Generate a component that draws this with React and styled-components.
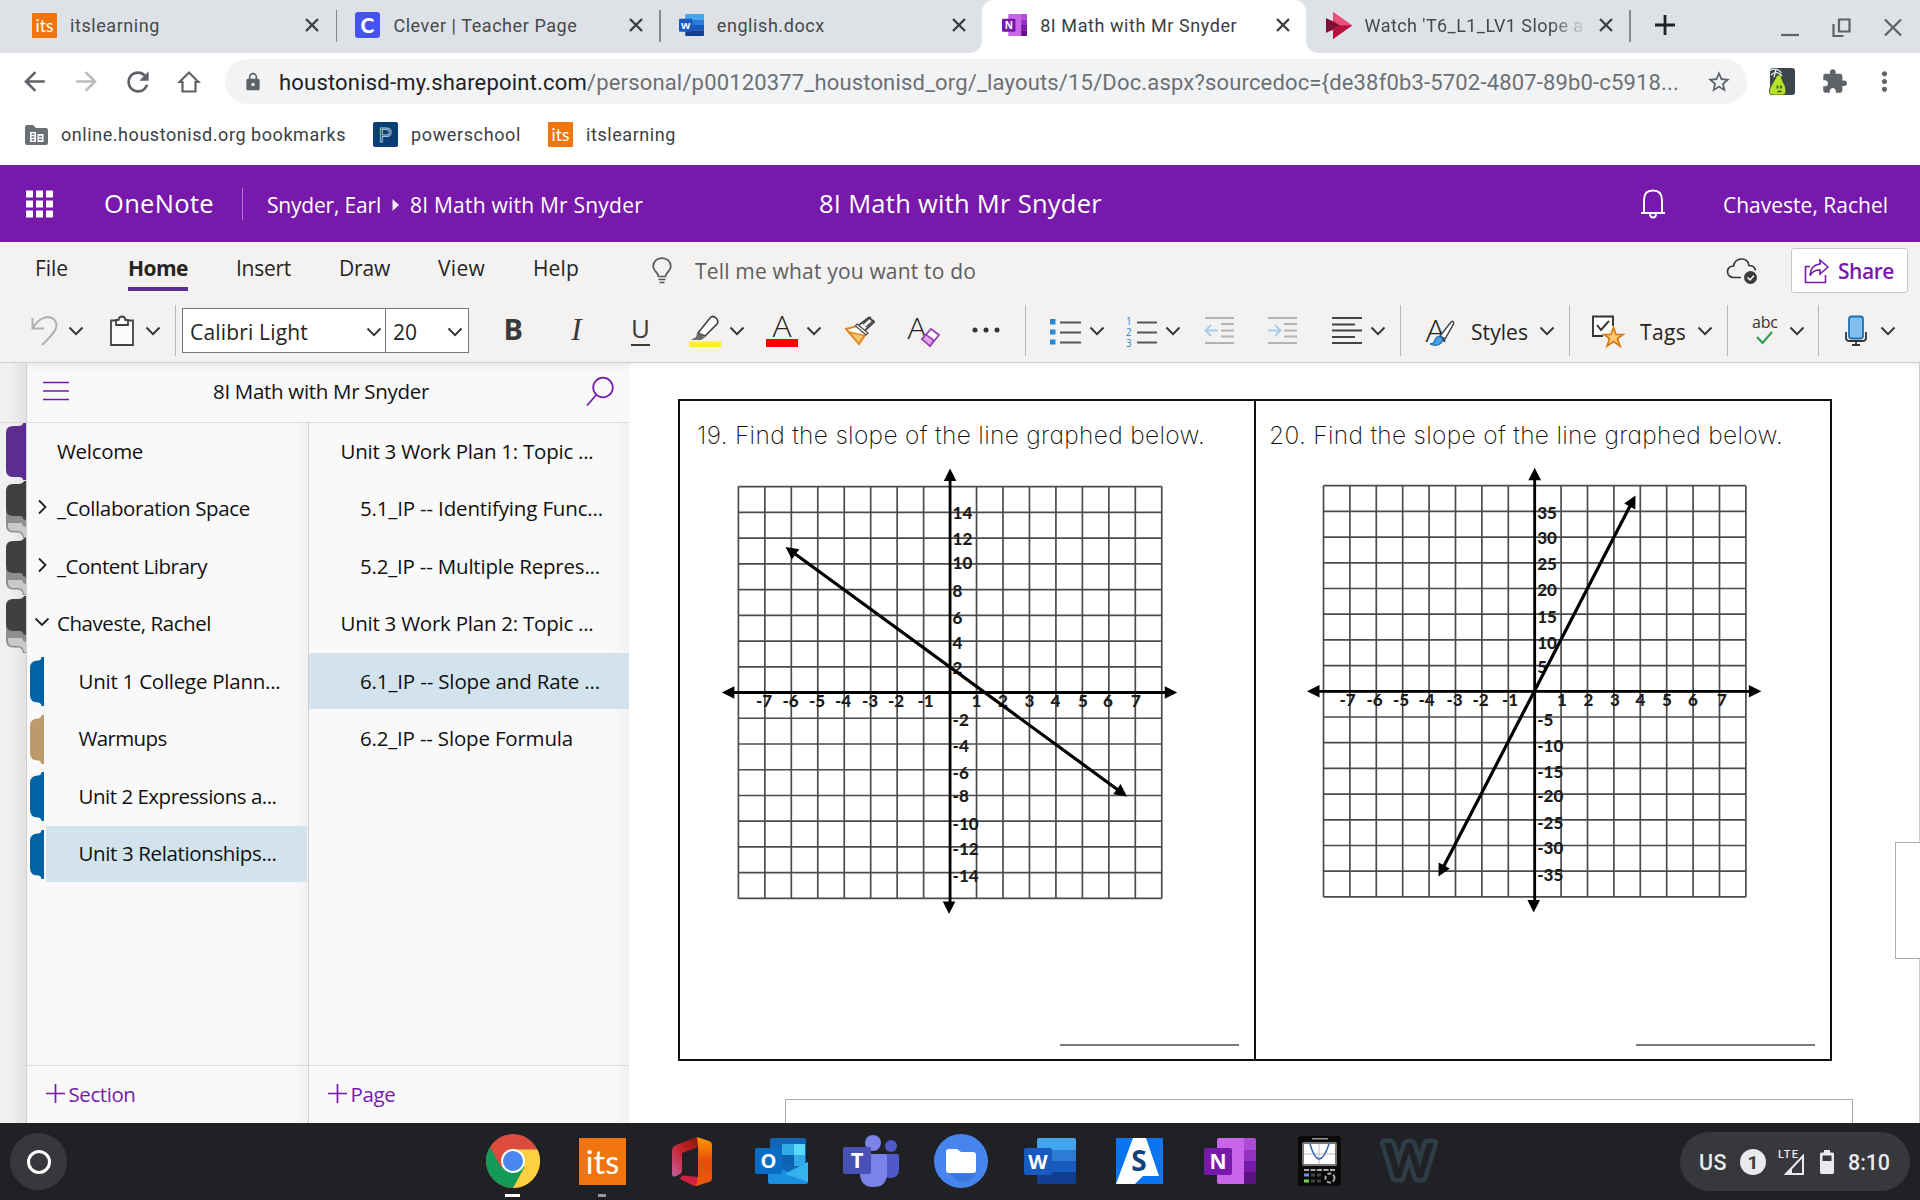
import React, { useLayoutEffect, useRef, useState } from 'react'
import styled, { createGlobalStyle } from 'styled-components';
import {
  MdArrowBack, MdArrowForward, MdRefresh, MdLock, MdStarBorder,
  MdExtension, MdMoreVert,
} from 'react-icons/md';

const UI = '"Open Sans", "Noto Sans", sans-serif';
const PURPLE = '#7719aa';


// spreads the letters so that a label takes the given width
const Fit = ({ w, children }) => {
  const ref = useRef(null);
  const [gap, setGap] = useState(0);

  useLayoutEffect(() => {
    const natural = ref.current.getBoundingClientRect().width;
    setGap((w - natural) / children.length);
  }, [])

  return <FitText ref={ref} style={{ letterSpacing: gap }}>{children}</FitText>
}

const Chev = ({ ml, color = '#333' }) => (
  <Icon $ml={ml} width="16" height="10" viewBox="0 0 16 10">
    <path d="M1.5 1.5L8 8.2L14.5 1.5" fill="none" stroke={color} strokeWidth="1.9" />
  </Icon>
)

const ItsLogo = ({ size, radius = 0 }) => (
  <Icon width={size} height={size} viewBox="0 0 26 26">
    <rect width="26" height="26" rx={radius} fill="#f0750f" />
    <text x="13" y="20" textAnchor="middle" fontFamily="Lato" fontSize="18" fill="#fff">its</text>
  </Icon>
)

const WordLogo = ({ w, h }) => (
  <Icon width={w} height={h} viewBox="0 0 52 46" preserveAspectRatio="none">
    <path d="M13 2a2 2 0 0 1 2-2h35a2 2 0 0 1 2 2v10H13z" fill="#41a5ee" />
    <path d="M13 12h39v11H13z" fill="#2b7cd3" />
    <path d="M13 23h39v11H13z" fill="#185abd" />
    <path d="M13 34h39v10a2 2 0 0 1-2 2H15a2 2 0 0 1-2-2z" fill="#103f91" />
    <rect y="10" width="28" height="27" rx="2" fill="#185abd" />
    <text x="14" y="30.5" textAnchor="middle" fontFamily="Open Sans" fontWeight="700" fontSize="20" fill="#fff">W</text>
  </Icon>
)

const NoteLogo = ({ w, h }) => (
  <Icon width={w} height={h} viewBox="0 0 52 46" preserveAspectRatio="none">
    <path d="M13 2a2 2 0 0 1 2-2h27v46H15a2 2 0 0 1-2-2z" fill="#ca64ea" />
    <path d="M40 0h10a2 2 0 0 1 2 2v10H40z" fill="#ae4bd5" />
    <path d="M40 12h12v11H40z" fill="#9332bf" />
    <path d="M40 23h12v11H40z" fill="#7719aa" />
    <path d="M40 34h12v10a2 2 0 0 1-2 2H40z" fill="#5b1382" />
    <rect y="10" width="28" height="27" rx="2" fill="#7719aa" />
    <text x="14" y="31" textAnchor="middle" fontFamily="Open Sans" fontWeight="700" fontSize="21" fill="#fff">N</text>
  </Icon>
)

const CleverLogo = () => (
  <Icon width="25" height="26" viewBox="0 0 25 26">
    <rect width="25" height="26" rx="3" fill="#4453f0" />
    <text x="12.5" y="20.5" textAnchor="middle" fontFamily="Lato" fontWeight="900" fontSize="21" fill="#fff">C</text>
  </Icon>
)

const StreamLogo = () => (
  <Icon width="26" height="27" viewBox="0 0 26 27">
    <path d="M7 0L26 13.5L7 27V18L0 20V7L7 9z" fill="#d9255b" />
    <path d="M7 0L26 13.5H14L7 8z" fill="#e8517f" />
    <path d="M0 6L14 13.5L0 21z" fill="#7d1037" />
    <path d="M7 27L26 13.5H14L7 17z" fill="#b5123f" />
  </Icon>
)


/* ---------- browser ---------- */

const tabs = [
  { icon: <ItsLogo size={25} radius={1} />, name: 'itslearning', w: 90 },
  { icon: <CleverLogo />, name: 'Clever | Teacher Page', w: 184 },
  { icon: <WordLogo w={25} h={22} />, name: 'english.docx', w: 108 },
  { icon: <NoteLogo w={25} h={22} />, name: '8I Math with Mr Snyder', w: 197, active: true },
  { icon: <StreamLogo />, name: "Watch 'T6_L1_LV1 Slope a", w: 219, fade: true },
]

const Browser = () => (
  <>
    <TabStrip>
      {tabs.map((t, i) => (
        <Tab key={t.name} $active={t.active} $line={i < 2 || i === 4}>
          {t.icon}
          <TabName $fade={t.fade}><Fit w={t.w}>{t.name}</Fit></TabName>
          <svg width="14" height="14" stroke="#3c4043" strokeWidth="2.400">
            <path d="M1 1L13 13M13 1L1 13" />
          </svg>
        </Tab>
      ))}
      <NewTab>
        <svg width="20" height="20" stroke="#202124" strokeWidth="2.800">
          <path d="M0 10H20M10 0V20" />
        </svg>
      </NewTab>
      <WindowButtons>
        <svg width="18" height="22"><path d="M0 19h18" stroke="#5f6368" strokeWidth="2.2" /></svg>
        <svg width="19" height="22" fill="none" stroke="#5f6368" strokeWidth="2.200">
          <path d="M7 3.500h10.500v12H7z" />
          <path d="M1.500 8v12h10" />
        </svg>
        <svg width="18" height="22" fill="none" stroke="#5f6368" strokeWidth="2.300">
          <path d="M1 3.500L17 19.500M17 3.500L1 19.500" />
        </svg>
      </WindowButtons>
    </TabStrip>
    <AddressRow>
      <NavButtons>
        <MdArrowBack size={31} />
        <MdArrowForward size={31} color="#babcbe" />
        <MdRefresh size={32} />
        <svg width="24" height="24" viewBox="0 0 24 24" fill="none" stroke="currentColor" strokeWidth="2.200">
          <path d="M2.500 12L12 2.500L21.500 12H18.500V21.500H5.500V12z" />
        </svg>
      </NavButtons>
      <Omnibox>
        <MdLock size={20} color="#5f6368" />
        <Url>
          <b><Fit w={308}>houstonisd-my.sharepoint.com</Fit></b>
          <Fit w={1092}>{'/personal/p00120377_houstonisd_org/_layouts/15/Doc.aspx?sourcedoc={de38f0b3-5702-4807-89b0-c5918...'}</Fit>
        </Url>
        <MdStarBorder size={26} color="#5f6368" />
      </Omnibox>
      <Extensions>
        <svg width="27" height="27" viewBox="0 0 27 27">
          <rect x="2" width="25" height="27" rx="3" fill="#3b474c" />
          <path d="M8 9C9 6 13 6 13.500 9C14 14 18 17 18 22C18 25 17 27 15 27H5C2 27 1 25 1.500 22C2 18 6 14 8 9z" fill="#b7e22c" stroke="#2c3a20" strokeWidth=".8" />
          <path d="M2 2.500C6 0 11 1 13.500 5M3 7C6 3.500 11 4 14 8M8 1L6 9" fill="none" stroke="#eef2e6" strokeWidth="1.300" />
          <path d="M9.500 17.500v3M13 17.500v3M9.500 23.500h4" stroke="#2d4a17" strokeWidth="1.600" />
        </svg>
        <MdExtension size={27} />
        <MdMoreVert size={31} />
      </Extensions>
    </AddressRow>
    <Bookmarks>
      <Bookmark>
        <svg width="23" height="22" viewBox="0 0 23 22">
          <path d="M0 2.500Q0 1 2 1H8L11 4H21Q23 4 23 6V19Q23 21 21 21H2Q0 21 0 19z" fill="#6b6f73" />
          <path d="M5 8h6v10H5zM12.500 10h6v8h-6z" fill="#fff" />
          <path d="M6.500 10h3M6.500 13h3M6.500 16h3M14 12.500h3M14 15.500h3" stroke="#6b6f73" strokeWidth="1.500" />
        </svg>
        <Fit w={285}>online.houstonisd.org bookmarks</Fit>
      </Bookmark>
      <Bookmark $ml={27}>
        <svg width="25" height="25" viewBox="0 0 25 25">
          <rect width="25" height="25" rx="2" fill="#0a3f73" />
          <text x="12.500" y="20" textAnchor="middle" fontFamily="Liberation Sans" fontSize="20" fill="none" stroke="#a9c2da" strokeWidth=".9">P</text>
        </svg>
        <Fit w={110}>powerschool</Fit>
      </Bookmark>
      <Bookmark $ml={27}>
        <ItsLogo size={25} radius={1} />
        <Fit w={90}>itslearning</Fit>
      </Bookmark>
    </Bookmarks>
  </>
)


/* ---------- ribbon ---------- */

const Header = () => (
  <HeaderBar>
    <svg width="28" height="28" viewBox="0 0 28 28" fill="#fff">
      {[0, 10, 20].map(y => [0, 10, 20].map(x => (
        <rect key={x + '-' + y} x={x} y={y + 0.5} width="7" height="7" />
      )))}
    </svg>
    <AppName><Fit w={110}>OneNote</Fit></AppName>
    <Crumbs>
      <Fit w={114}>Snyder, Earl</Fit>
      <svg width="8" height="14"><path d="M0.500 1L7 7L0.500 13z" fill="#fff" opacity=".9" /></svg>
      <Fit w={233}>8I Math with Mr Snyder</Fit>
    </Crumbs>
    <BookTitle><Fit w={283}>8I Math with Mr Snyder</Fit></BookTitle>
    <svg width="26" height="30" viewBox="0 0 26 30" fill="none" stroke="#fff" strokeWidth="1.900">
      <path d="M1 24H25M4 24V11Q4 1.500 13 1.500Q22 1.500 22 11V24" />
      <path d="M10 24.500Q10 28.500 13 28.500Q16 28.500 16 24.500" />
    </svg>
    <UserName><Fit w={165}>Chaveste, Rachel</Fit></UserName>
  </HeaderBar>
)

const menu = [
  { name: 'File', ml: 35, w: 33 },
  { name: 'Home', ml: 60, w: 60, active: true },
  { name: 'Insert', ml: 48, w: 55 },
  { name: 'Draw', ml: 48, w: 51 },
  { name: 'View', ml: 48, w: 47 },
  { name: 'Help', ml: 48, w: 46 },
]

const Menu = () => (
  <MenuRow>
    {menu.map(m => (
      <MenuItem key={m.name} $ml={m.ml} $w={m.w} $active={m.active}><Fit w={m.w}>{m.name}</Fit></MenuItem>
    ))}
    <TellMe>
      <svg width="20" height="28" viewBox="0 0 20 28" fill="none" stroke="#555" strokeWidth="1.700">
        <path d="M6.500 19.500C6.500 15.500 1.200 14 1.200 9.500C1.200 4.500 5 1.200 10 1.200C15 1.200 18.800 4.500 18.800 9.500C18.800 14 13.500 15.500 13.500 19.500zM6.500 22.500H13.500M7.500 25.500H12.500" />
      </svg>
      <Fit w={281}>Tell me what you want to do</Fit>
    </TellMe>
    <svg width="32" height="28" viewBox="0 0 32 28">
      <path d="M15 20.500H8C4 20.500 1.500 18 1.500 14.500C1.500 11 4.500 8.800 7.500 9C8.500 4.500 11.500 2 15.500 2C20 2 22.500 5 23 8.500C26.500 8.500 29 10.500 29.500 13.500" fill="none" stroke="#333" strokeWidth="1.700" />
      <circle cx="24.500" cy="20.500" r="6.500" fill="#3b3a39" />
      <path d="M21.500 20.500L24 23L28 18.500" fill="none" stroke="#fff" strokeWidth="1.500" />
    </svg>
    <Share>
      <svg width="26" height="26" viewBox="0 0 26 26" fill="none" stroke={PURPLE} strokeWidth="1.600">
        <path d="M6 8.500H1.500V24.500H21.500V17" />
        <path d="M16 2L24 9L16 16V12C11 12 8 14 6 17.500C6.500 11 10 6.500 16 6z" />
      </svg>
      <Fit w={56}>Share</Fit>
    </Share>
  </MenuRow>
)

const ListLines = ({ x = 10 }) => (
  <path d={`M${x} 7.500H31M${x} 17.500H31M${x} 27.500H31`} stroke="#555" strokeWidth="2" />
)

const Tools = () => (
  <ToolRow>
    <Icon $ml={30} width="30" height="32" fill="none" stroke="#b3b1af" strokeWidth="2">
      <path d="M2.500 3V13.500H14M2.500 13.500C8 3.500 17 -.5 23.500 4C29.500 10 27 16 12 30" />
    </Icon>
    <Chev ml={8} />
    <Icon $ml={25} width="26" height="32" fill="none" stroke="#444" strokeWidth="1.800">
      <path d="M7 5.500H2V30H24V5.500H19" fill="#fafafa" />
      <path d="M7 10V5H9.500Q10 1.500 13 1.500Q16 1.500 16.500 5H19V10z" fill="#fff" />
    </Icon>
    <Chev ml={10} />
    <Sep $ml={14} />
    <FontBox>
      <FontName><Fit w={118}>Calibri Light</Fit><Chev /></FontName>
      <FontSize><Fit w={24}>20</Fit><Chev /></FontSize>
    </FontBox>
    <Glyph $ml={34} $w={19} $bold><Fit w={18}>B</Fit></Glyph>
    <Glyph $ml={46} $w={17} $italic>I</Glyph>
    <Glyph $ml={46} $w={19} $under>U</Glyph>
    <Icon $ml={38} width="34" height="32">
      <path d="M10 18L22 3Q25 0 28 3Q31 6 29 9L17 21z" fill="#fff" stroke="#444" strokeWidth="1.700" />
      <path d="M9.500 17L17 22.500L13 25H3L8 22z" fill="#6b6b6b" />
      <rect x="1" y="26.500" width="32" height="5.500" fill="#fff021" />
    </Icon>
    <Chev ml={7} />
    <Icon $ml={20} width="34" height="32">
      <text x="17" y="22" textAnchor="middle" fontFamily="Open Sans" fontWeight="300" fontSize="29" textLength="19" lengthAdjust="spacingAndGlyphs" fill="#222">A</text>
      <rect x="1" y="24" width="32" height="8" fill="#f00" />
    </Icon>
    <Chev ml={7} />
    <Icon $ml={22} width="31" height="32">
      <path d="M15 10L25 2.500L30 7L21 15.500" fill="#f3f2f1" stroke="#444" strokeWidth="1.800" />
      <path d="M19 9L27 2M22 12L30 5" stroke="#444" strokeWidth="1.200" />
      <path d="M2 14L13 11L22 19L15 29z" fill="#fff" stroke="#e08a24" strokeWidth="2" />
      <path d="M5 17L20 20.500L15 29z" fill="#fbc66f" stroke="#e08a24" strokeWidth="1.600" />
      <path d="M13 9L24 18L22 20L11.500 11z" fill="#fff" stroke="#444" strokeWidth="1.200" />
    </Icon>
    <Icon $ml={33} width="32" height="32">
      <text x="9" y="24" textAnchor="middle" fontFamily="Open Sans" fontWeight="300" fontSize="29" textLength="19" lengthAdjust="spacingAndGlyphs" fill="#222">A</text>
      <path d="M14 24L23 14L31 20L22 31z" fill="#fff" stroke="#9b3fb5" strokeWidth="1.800" />
      <path d="M14 24L18 19.500L26 25.500L22 31z" fill="#dca6e8" stroke="#9b3fb5" strokeWidth="1.600" />
    </Icon>
    <Icon $ml={31} width="30" height="32" fill="#333">
      <circle cx="4" cy="15" r="2.500" /><circle cx="15" cy="15" r="2.500" /><circle cx="26" cy="15" r="2.500" />
    </Icon>
    <Sep $ml={24} />
    <Icon $ml={24} width="31" height="32">
      <path d="M0 4h5.500v5.500H0zM0 14.500h5.500v5H0zM0 24.500h5.500v5H0z" fill="#2b88d8" />
      <ListLines />
    </Icon>
    <Chev ml={8} />
    <Icon $ml={21} width="31" height="32">
      <g fontFamily="Open Sans" fontSize="10" fill="#2b88d8"><text x="0" y="9.500">1</text><text x="0" y="20.500">2</text><text x="0" y="31.500">3</text></g>
      <ListLines x={11} />
    </Icon>
    <Chev ml={8} />
    <Icon $ml={23} width="31" height="32" fill="none" strokeWidth="1.900">
      <path d="M1 3H30M17 9H30M17 15.500H30M17 21.500H30M1 28H30" stroke="#b5b3b1" />
      <path d="M14 15.500H2M7 10L1.500 15.500L7 21" stroke="#a4cdec" />
    </Icon>
    <Icon $ml={32} width="31" height="32" fill="none" strokeWidth="1.900">
      <path d="M1 3H30M17 9H30M17 15.500H30M17 21.500H30M1 28H30" stroke="#b5b3b1" />
      <path d="M1 15.500H13M8 10L13.500 15.500L8 21" stroke="#a4cdec" />
    </Icon>
    <Icon $ml={34} width="31" height="32" stroke="#444" strokeWidth="2.100">
      <path d="M0 3H30M0 9.500H23M0 15.500H30M0 22H23M0 28H30" />
    </Icon>
    <Chev ml={7} />
    <Sep $ml={14} />
    <Icon $ml={24} width="31" height="32">
      <text x="10.500" y="27" textAnchor="middle" fontFamily="Open Sans" fontWeight="300" fontSize="31" textLength="20" lengthAdjust="spacingAndGlyphs" fill="#222">A</text>
      <path d="M15 21L26 7Q29 5 28.500 9L20 24z" fill="#fff" stroke="#444" strokeWidth="1.500" />
      <path d="M5 29Q9 29 10 25Q12 20 16 22Q19 25 16 28Q12 32 5 29z" fill="#4aa3e6" stroke="#1f6fb5" strokeWidth="1.300" />
    </Icon>
    <Word $ml={15} $w={57}><Fit w={57}>Styles</Fit></Word>
    <Chev ml={11} />
    <Sep $ml={14} />
    <Icon $ml={21} width="34" height="32">
      <path d="M22 11V1.500H2V21H12" fill="#fff" stroke="#333" strokeWidth="1.900" />
      <path d="M6 10L10 15L18 6" fill="none" stroke="#333" strokeWidth="1.900" />
      <path d="M22.500 12.500L25 19.500H32L26.500 23.500L29 31L22.500 26.500L16 31L18.500 23.500L13 19.500H20z" fill="#fcc873" stroke="#d67a0f" strokeWidth="1.700" />
    </Icon>
    <Word $ml={15} $w={46}><Fit w={46}>Tags</Fit></Word>
    <Chev ml={11} />
    <Sep $ml={14} />
    <Icon $ml={23} width="28" height="34">
      <text x="1" y="14" fontFamily="Open Sans" fontSize="16" textLength="26" fill="#333">abc</text>
      <path d="M6 23L11.500 29L21 18" fill="none" stroke="#2e9e4f" strokeWidth="2" />
    </Icon>
    <Chev ml={10} />
    <Sep $ml={13} />
    <Icon $ml={25} width="24" height="32" fill="none">
      <rect x="5" y="1.500" width="14" height="22" rx="2.500" fill="#83beec" stroke="#1f6fb5" strokeWidth="1.800" />
      <path d="M2 17V23Q2 26 6 26H18Q22 26 22 23V17M12 26V30M8 30H16" stroke="#333" strokeWidth="1.800" />
    </Icon>
    <Chev ml={12} />
  </ToolRow>
)


/* ---------- navigation ---------- */

const sections = [
  { name: 'Welcome', w: 86 },
  { name: '_Collaboration Space', w: 193, arrow: 'right' },
  { name: '_Content Library', w: 150, arrow: 'right' },
  { name: 'Chaveste, Rachel', w: 154, arrow: 'down' },
  { name: 'Unit 1 College Plann...', w: 202, color: '#0063a6' },
  { name: 'Warmups', w: 88, color: '#bd996c' },
  { name: 'Unit 2 Expressions a...', w: 198, color: '#0063a6' },
  { name: 'Unit 3 Relationships...', w: 198, color: '#0063a6', active: true },
]

const pages = [
  { name: 'Unit 3 Work Plan 1: Topic ...', w: 253 },
  { name: '5.1_IP -- Identifying Func...', w: 243, sub: true },
  { name: '5.2_IP -- Multiple Repres...', w: 240, sub: true },
  { name: 'Unit 3 Work Plan 2: Topic ...', w: 253 },
  { name: '6.1_IP -- Slope and Rate ...', w: 240, sub: true, active: true },
  { name: '6.2_IP -- Slope Formula', w: 213, sub: true },
]

const BookTab = ({ color }) => (
  <BookTabSvg width="20" height="57.5" viewBox="0 0 20 57.5">
    {!color && (
      <>
        <path d="M0 30H20V57H17Q16 51.500 12 51.500H6Q0 51 0 44z" fill="#8e8e8e" />
        <path d="M2 42H15Q17 42 17 45L20 46V56H18Q17 50 12 50H7Q2 50 2 44z" fill="#c9c9c9" />
        <path d="M20 0H18Q17 3 12 3H7Q0 3 0 10V28Q0 35 7 35H14Q17 35 17 38L20 39z" fill="#404040" />
      </>
    )}
    {color && (
      <path d="M20 0H17Q17 3 12 3H7Q0 3 0 10V47Q0 54 7 54H13Q17 54 17 57H20z" fill={color} />
    )}
  </BookTabSvg>
)

const Nav = () => (
  <>
    <BookStrip>
      <StripHead />
      <BookTab color="#5c2d91" />
      <BookTab />
      <BookTab />
      <BookTab />
    </BookStrip>
    <NavPanel>
      <NavHead>
        <svg width="26" height="22" stroke={PURPLE} strokeWidth="1.700">
          <path d="M0 2.500H26M0 11H26M0 19.500H26" />
        </svg>
        <NavTitle><Fit w={216}>8I Math with Mr Snyder</Fit></NavTitle>
        <svg width="28" height="30" viewBox="0 0 28 30" fill="none" stroke={PURPLE} strokeWidth="1.700">
          <circle cx="17" cy="11.500" r="9.800" />
          <path d="M10.500 18.500L1 29.500" />
        </svg>
      </NavHead>
      <Columns>
        <Column $w={282} $line>
          <List>
            {sections.map(s => (
              <SectionRow key={s.name}>
                <Marker>
                  {s.color && (
                    <svg width="14" height="49"><path d="M14 0H11.500Q11 3.500 8 3.500Q0 3.500 0 11V38Q0 45.500 8 45.500Q11 45.500 11.500 49H14z" fill={s.color} /></svg>
                  )}
                </Marker>
                <SectionName $sub={s.color} $active={s.active}>
                  {s.arrow && (
                    <Arrow>
                      <svg width="16" height="16" fill="none" stroke="#222" strokeWidth="1.800">
                        <path d={s.arrow === 'right' ? 'M5 1.500L11.500 8L5 14.500' : 'M1.500 4.500L8 11L14.500 4.500'} />
                      </svg>
                    </Arrow>
                  )}
                  <Fit w={s.w}>{s.name}</Fit>
                </SectionName>
              </SectionRow>
            ))}
          </List>
          <AddRow><Plus /><Fit w={67}>Section</Fit></AddRow>
        </Column>
        <Column $w={320}>
          <List>
            {pages.map(p => (
              <PageRow key={p.name} $sub={p.sub} $active={p.active}><Fit w={p.w}>{p.name}</Fit></PageRow>
            ))}
          </List>
          <AddRow><Plus /><Fit w={45}>Page</Fit></AddRow>
        </Column>
      </Columns>
    </NavPanel>
  </>
)

const Plus = () => (
  <svg width="19" height="19" stroke={PURPLE} strokeWidth="1.700"><path d="M0 9.500H19M9.500 0V19" /></svg>
)


/* ---------- worksheet ---------- */

const graphs = [
  {
    left: 58.4, top: 85.6, stepX: 26.46, stepY: 25.74,
    yLabels: [[14, 112.6], [12, 137.9], [10, 162.6], [8, 190.4], [6, 216.9], [4, 242.6], [2, 266.9], [-2, 319.4], [-4, 345], [-6, 371.9], [-8, 394.7], [-10, 422.9], [-12, 448.3], [-14, 475]],
    xLabels: [84, 110.5, 137, 163, 190, 216, 245.5, 296.5, 323, 349.5, 375.5, 403, 428, 456],
    line: [105.5, 145.9, 447, 395.5],
  },
  {
    left: 67.5, top: 84.7, stepX: 26.4, stepY: 25.7,
    yLabels: [[35, 112.6], [30, 137.2], [25, 163.6], [20, 189], [15, 215.8], [10, 242.6], [5, 266.5], [-5, 319.4], [-10, 345], [-15, 370.8], [-20, 395.4], [-25, 422.2], [-30, 447.6], [-35, 474]],
    xLabels: [91.5, 118.5, 145, 170.5, 198.5, 224.5, 254, 306, 332.5, 359, 384.5, 411, 437, 466],
    line: [182.5, 475.6, 379.5, 94.4],
  },
]

// arrow head whose tip is at x, y and which points along angle a (degrees)
const Head = ({ x, y, a }) => (
  <path d="M0 0L-12.500 -6.300V6.300z" transform={`translate(${x} ${y}) rotate(${a})`} fill="#000" />
)

const Graph = ({ g }) => {
  const right = g.left + g.stepX * 16;
  const bottom = g.top + g.stepY * 16;
  const ox = g.left + g.stepX * 8;
  const oy = g.top + g.stepY * 8;
  const [x1, y1, x2, y2] = g.line;
  const angle = Math.atan2(y2 - y1, x2 - x1);
  const cx = Math.cos(angle) * 9;
  const cy = Math.sin(angle) * 9;

  return (
    <GraphSvg width="570" height="560">
      <g stroke="#4c4c4c" strokeWidth="1.700">
        {[...Array(17)].map((_, i) => (
          <React.Fragment key={i}>
            <path d={`M${g.left + i * g.stepX} ${g.top}V${bottom}`} />
            <path d={`M${g.left} ${g.top + i * g.stepY}H${right}`} />
          </React.Fragment>
        ))}
      </g>
      <path d={`M${ox} ${g.top - 10}V${bottom + 8}M${g.left - 8} ${oy}H${right + 8}`} stroke="#000" strokeWidth="2.800" />
      <Head x={ox} y={g.top - 18} a={-90} />
      <Head x={ox - 1} y={bottom + 15.5} a={90} />
      <Head x={g.left - 16.5} y={oy} a={180} />
      <Head x={right + 15.5} y={oy} a={0} />
      {g.yLabels.map(([n, y]) => <text key={n} x={ox + 2.5} y={y + 5.8}>{n}</text>)}
      {g.xLabels.map((x, i) => (
        <text key={x} x={x} y={oy + 14.8} textAnchor="middle">{i < 7 ? i - 7 : i - 6}</text>
      ))}
      <path d={`M${x1 + cx} ${y1 + cy}L${x2 - cx} ${y2 - cy}`} stroke="#000" strokeWidth="3.200" />
      <Head x={x1} y={y1} a={angle * 180 / Math.PI + 180} />
      <Head x={x2} y={y2} a={angle * 180 / Math.PI} />
    </GraphSvg>
  )
}

const Worksheet = () => (
  <Canvas>
    <Problems>
      <Problem>
        <Question $pl={17}><Fit w={508}>19. Find the slope of the line graphed below.</Fit></Question>
        <Graph g={graphs[0]} />
        <Answer />
      </Problem>
      <Problem $line>
        <Question $pl={13}><Fit w={514}>20. Find the slope of the line graphed below.</Fit></Question>
        <Graph g={graphs[1]} />
        <Answer />
      </Problem>
    </Problems>
    <NextBox />
    <SideHandle />
  </Canvas>
)


/* ---------- shelf ---------- */

const Shelf = () => (
  <ShelfBar>
    <Launcher><span /></Launcher>
    <Apps>
      <AppSlot $run="15px" $live>
        <svg width="54" height="54" viewBox="0 0 54 54">
          <circle cx="27" cy="27" r="27" fill="#db4c3f" />
          <path d="M4 13A27 27 0 0 0 27 54L39 33L27 27L15 33z" fill="#139a57" />
          <path d="M27 54A27 27 0 0 0 51.500 15.500H27L38.500 33z" fill="#fdcf41" />
          <circle cx="27" cy="27" r="12" fill="#fff" />
          <circle cx="27" cy="27" r="10" fill="#4a87ee" />
        </svg>
      </AppSlot>
      <AppSlot $run="8px"><ItsLogo size={47} /></AppSlot>
      <AppSlot>
        <svg width="40" height="49" viewBox="0 0 40 49">
          <defs>
            <linearGradient id="of1" x1="0" y1="1" x2="1" y2="0"><stop offset="0" stopColor="#c75fa5" /><stop offset=".5" stopColor="#c4242b" /><stop offset="1" stopColor="#8e1408" /></linearGradient>
            <linearGradient id="of2" x1="0" y1="0" x2="0" y2="1"><stop offset="0" stopColor="#ff9a00" /><stop offset=".5" stopColor="#e84a0a" /><stop offset="1" stopColor="#ef5b0a" /></linearGradient>
          </defs>
          <path d="M25 0L4 8Q0 10 0 14V36Q0 41 4 39L8 37Q10 36 10 33V16L26 10z" fill="url(#of1)" />
          <path d="M8 42L20 48Q23 49.500 26 49V40L10 38.500z" fill="#d3203f" />
          <path d="M25 0L37 4Q40 5 40 8V41Q40 44 37 45L24 49L26 40V10z" fill="url(#of2)" />
        </svg>
      </AppSlot>
      <AppSlot>
        <svg width="53" height="46" viewBox="0 0 53 46">
          <rect x="15" width="36" height="34" rx="2" fill="#1066b5" />
          <path d="M27 6H39V17H27z" fill="#32a9e7" /><path d="M39 6H50V17H39z" fill="#58d9fd" />
          <path d="M27 17H39V28H27z" fill="#0a62b0" /><path d="M39 17H50V28H39z" fill="#32a9e7" />
          <path d="M13 24L33 34L53 24V44Q53 46 51 46H15Q13 46 13 44z" fill="#1b8fdf" />
          <path d="M30 36L53 24V44z" fill="#35b1ee" />
          <rect y="10" width="27" height="26" rx="2" fill="#0a6cc4" />
          <text x="13.500" y="30" textAnchor="middle" fontFamily="Open Sans" fontWeight="700" fontSize="20" fill="#fff">O</text>
        </svg>
      </AppSlot>
      <AppSlot>
        <svg width="56" height="52" viewBox="0 0 56 52">
          <circle cx="48" cy="11" r="6" fill="#5059c9" />
          <path d="M38 19H54Q56 19 56 21V34Q56 43 47 43Q38 43 38 36z" fill="#5059c9" />
          <circle cx="30" cy="8" r="8" fill="#7b83eb" />
          <path d="M17 19H42Q44 19 44 21V38Q44 52 30.500 52Q17 52 17 38z" fill="#7b83eb" />
          <rect y="12" width="28" height="27" rx="2" fill="#4951b5" />
          <text x="14" y="33" textAnchor="middle" fontFamily="Open Sans" fontWeight="700" fontSize="22" fill="#fff">T</text>
        </svg>
      </AppSlot>
      <AppSlot>
        <svg width="54" height="54" viewBox="0 0 54 54">
          <circle cx="27" cy="27" r="27" fill="#4684ee" />
          <path d="M16 40H42L36 46Q28 50 22 46z" fill="#3b76dc" />
          <path d="M12 18Q12 15 15 15H23L27 18H39Q42 18 42 21V36Q42 39 39 39H15Q12 39 12 36z" fill="#fff" />
        </svg>
      </AppSlot>
      <AppSlot><WordLogo w={52} h={46} /></AppSlot>
      <AppSlot>
        <svg width="47" height="46" viewBox="0 0 47 46">
          <rect width="47" height="46" fill="#0b74f2" />
          <path d="M17 0H30L43 38H27L19 46H0z" fill="#fff" />
          <text x="23" y="33" textAnchor="middle" fontFamily="Open Sans" fontWeight="700" fontSize="28" fill="#13417c">S</text>
        </svg>
      </AppSlot>
      <AppSlot><NoteLogo w={52} h={46} /></AppSlot>
      <AppSlot>
        <svg width="43" height="50" viewBox="0 0 43 50">
          <rect width="43" height="50" rx="3" fill="#0a0a0a" />
          <rect x="14" y="2" width="16" height="1.500" fill="#999" />
          <rect x="4" y="6" width="35" height="24" rx="2" fill="#777" />
          <rect x="6" y="8" width="31" height="20" fill="#fff" />
          <path d="M6 18H37M21 8V28" stroke="#bbb" />
          <path d="M12 8Q21 38 31 8" fill="none" stroke="#3561c0" strokeWidth="1.500" />
          <path d="M6 34H37" stroke="#aaa" strokeWidth="2" strokeDasharray="5 1.500" />
          <path d="M6 39H11" stroke="#6f8ff0" strokeWidth="3" /><path d="M6 45H11" stroke="#6fd84a" strokeWidth="3" />
          <path d="M13 39H24M13 45H24" stroke="#444" strokeWidth="3" strokeDasharray="4 2" />
          <circle cx="32" cy="42" r="4.500" fill="none" stroke="#aaa" strokeWidth="2" strokeDasharray="4 2" />
        </svg>
      </AppSlot>
      <AppSlot>
        <svg width="60" height="60" viewBox="0 0 60 60">
          <text x="30" y="47" textAnchor="middle" fontFamily="Lato" fontWeight="700" fontSize="48" textLength="50" lengthAdjust="spacingAndGlyphs"
            fill="#202124" stroke="#2f3d47" strokeWidth="9" strokeLinejoin="round" paintOrder="stroke">W</text>
        </svg>
      </AppSlot>
    </Apps>
    <Status>
      <Fit w={28}>US</Fit>
      <Count>1</Count>
      <svg width="27" height="30" viewBox="0 0 27 30">
        <text x="0" y="10.500" fontFamily="Roboto" fontWeight="500" fontSize="11" textLength="20" fill="#e8eaed">LTE</text>
        <path d="M25 9V27H8z" fill="none" stroke="#e8eaed" strokeWidth="2" />
        <path d="M14 20V27H7z" fill="#e8eaed" />
      </svg>
      <svg width="14" height="24" viewBox="0 0 14 24">
        <path d="M4 0H10V2.500H12.500Q14 2.500 14 4V22Q14 24 12.500 24H1.500Q0 24 0 22V4Q0 2.500 1.500 2.500H4z" fill="#e8eaed" />
        <path d="M2.500 5.500H11.500V11H2.500z" fill="#37383b" />
      </svg>
      <Fit w={42}>8:10</Fit>
    </Status>
  </ShelfBar>
)


const App = () => (
  <>
    <Global />
    <Screen>
      <Browser />
      <Header />
      <Ribbon>
        <Menu />
        <Tools />
      </Ribbon>
      <Body>
        <Nav />
        <Worksheet />
      </Body>
      <Shelf />
    </Screen>
  </>
)


const Global = createGlobalStyle`
* { box-sizing: border-box; }
body { margin: 0; }
`

const Screen = styled.div`
    width: 1920px;
    height: 1200px;
    display: flex;
    flex-direction: column;
    overflow: hidden;
    background: #fff;
    font-family: ${UI};
    white-space: pre;

    svg{
        display: block;
        flex: none;
    }
`

const FitText = styled.span`
    display: inline-block;
    flex: none;
`

const Icon = styled.svg`
    margin-left: ${p => p.$ml || 0}px;
    overflow: visible;
`

const TabStrip = styled.div`
    height: 53px;
    display: flex;
    background: #dee1e6;
    padding-left: 12px;
    font-family: Roboto, sans-serif;
    font-size: 18px;
    color: #45494d;
`

const Tab = styled.div`
    width: 323.4px;
    height: 53px;
    flex: none;
    display: flex;
    align-items: center;
    padding: 0 16px 3px 20px;
    position: relative;
    background: ${p => p.$active ? '#fff' : 'none'};
    border-radius: 12px 12px 0 0;
    color: ${p => p.$active ? '#3c4043' : '#45494d'};

    &::before, &::after{
        content: '';
        display: ${p => p.$active ? 'block' : 'none'};
        position: absolute;
        bottom: 0;
        width: 12px;
        height: 12px;
    }
    &::before{
        left: -12px;
        background: radial-gradient(circle at 0 0, transparent 11.5px, #fff 12px);
    }
    &::after{
        right: -12px;
        background: radial-gradient(circle at 100% 0, transparent 11.5px, #fff 12px);
    }
    ${p => p.$line && `
    &::after{
        display: block;
        right: -2px;
        bottom: 11px;
        width: 1.5px;
        height: 32px;
        background: #85888c;
    }`}
`

const TabName = styled.div`
    width: 222px;
    flex: none;
    margin-left: 13px;
    margin-right: auto;
    overflow: hidden;
    ${p => p.$fade && 'mask-image: linear-gradient(90deg, #000 185px, transparent 222px);'}
`

const NewTab = styled.div`
    height: 50px;
    display: flex;
    align-items: center;
    margin-left: 26px;
`

const WindowButtons = styled.div`
    display: flex;
    gap: 33px;
    margin-left: auto;
    padding: 16px 18px 0 0;
`

const AddressRow = styled.div`
    height: 56px;
    display: flex;
    align-items: center;
    padding-top: 1px;
    font-family: Roboto, sans-serif;
`

const NavButtons = styled.div`
    width: 225px;
    display: flex;
    align-items: center;
    gap: 20.5px;
    padding-left: 19px;
    color: #5f6368;

    svg:last-child{
        margin-left: 2px;
    }
`

const Omnibox = styled.div`
    width: 1522px;
    height: 45px;
    flex: none;
    display: flex;
    align-items: center;
    padding: 0 15px 0 18px;
    border-radius: 23px;
    background: #f1f3f4;
`

const Url = styled.div`
    display: flex;
    margin-left: 16px;
    margin-right: auto;
    padding-top: 1px;
    font-size: 22px;
    color: #6c7074;

    b{
        font-weight: 400;
        color: #202124;
    }
`

const Extensions = styled.div`
    display: flex;
    align-items: center;
    margin-left: 21px;
    gap: 26px;
    color: #5f6368;

    svg:last-child{
        margin-left: -5px;
    }
`

const Bookmarks = styled.div`
    height: 56px;
    display: flex;
    align-items: center;
    padding: 0 0 5px 25px;
    font-family: Roboto, sans-serif;
    font-size: 18px;
    color: #3c4043;
`

const Bookmark = styled.div`
    display: flex;
    align-items: center;
    gap: 13px;
    margin-left: ${p => p.$ml || 0}px;
`

const HeaderBar = styled.div`
    height: 77px;
    flex: none;
    display: flex;
    align-items: center;
    padding-left: 26px;
    background: ${PURPLE};
    color: #fff;
    font-size: 21px;
`

const AppName = styled.div`
    width: 139px;
    height: 32px;
    flex: none;
    display: flex;
    align-items: center;
    margin-left: 50px;
    margin-right: -28px;
    padding-bottom: 1px;
    border-right: 1px solid #ae7acb;
    font-size: 25.5px;
`

const Crumbs = styled.div`
    width: 376px;
    flex: none;
    display: flex;
    align-items: center;
    gap: 10.5px;
    margin-left: 52px;
    padding-top: 2px;
`

const BookTitle = styled.div`
    width: 282px;
    flex: none;
    margin-left: 176px;
    margin-right: 539px;
    padding-bottom: 2px;
    font-size: 25.5px;
`

const UserName = styled.div`
    margin-left: 57px;
    padding-top: 2px;
`

const Ribbon = styled.div`
    height: 121px;
    flex: none;
    background: #f3f2f1;
    border-bottom: 1px solid #d2d0ce;
    color: #252423;
    font-size: 21px;
`

const MenuRow = styled.div`
    height: 57px;
    display: flex;
    align-items: center;
`

const MenuItem = styled.div`
    width: ${p => p.$w}px;
    height: 49px;
    flex: none;
    margin-left: ${p => p.$ml}px;
    margin-bottom: 8px;
    padding-top: 12px;
    line-height: 28px;
    font-weight: ${p => p.$active ? 700 : 400};
    border-bottom: 4px solid ${p => p.$active ? '#5c2d91' : 'transparent'};
`

const TellMe = styled.div`
    width: 323px;
    flex: none;
    display: flex;
    align-items: center;
    gap: 23px;
    margin-left: 73px;
    margin-right: 751px;
    color: #605e5c;
`

const Share = styled.div`
    width: 117px;
    height: 45px;
    flex: none;
    display: flex;
    align-items: center;
    gap: 8px;
    margin-left: 33px;
    padding-left: 12px;
    padding-top: 1px;
    background: #fff;
    border: 1px solid #c8c6c4;
    border-radius: 3px;
    color: ${PURPLE};
    font-weight: 600;
`

const ToolRow = styled.div`
    height: 63px;
    display: flex;
    align-items: center;
`

const Sep = styled.div`
    width: 1px;
    height: 51px;
    flex: none;
    margin-left: ${p => p.$ml}px;
    background: #bab8b7;
`

const FontBox = styled.div`
    width: 287px;
    height: 45px;
    flex: none;
    display: flex;
    margin-left: 6px;
    background: #fff;
    border: 1px solid #7a7877;
`

const FontName = styled.div`
    width: 203px;
    display: flex;
    align-items: center;
    justify-content: space-between;
    padding: 2px 3px 0 7px;
    border-right: 1px solid #7a7877;
`

const FontSize = styled.div`
    flex: 1;
    display: flex;
    align-items: center;
    justify-content: space-between;
    padding: 2px 5px 0 7px;
`

const Glyph = styled.div`
    width: ${p => p.$w}px;
    height: ${p => p.$under ? 31 : 34}px;
    flex: none;
    margin-left: ${p => p.$ml}px;
    text-align: center;
    font-family: ${p => p.$italic ? '"Liberation Serif", serif' : UI};
    font-style: ${p => p.$italic ? 'italic' : 'normal'};
    font-weight: ${p => p.$bold ? 700 : 400};
    font-size: ${p => p.$bold ? 29 : p.$italic ? 31 : 26}px;
    line-height: ${p => p.$under ? 26 : p.$bold ? 30 : 32}px;
    color: #3b3a39;
    border-bottom: ${p => p.$under ? '2px solid #3b3a39' : 'none'};
`

const Word = styled.div`
    width: ${p => p.$w}px;
    flex: none;
    margin-left: ${p => p.$ml}px;
    padding-top: 3px;
`

const Body = styled.div`
    height: 760px;
    flex: none;
    display: flex;
`

const BookStrip = styled.div`
    width: 27px;
    flex: none;
    display: flex;
    flex-direction: column;
    align-items: flex-end;
    background: linear-gradient(90deg, #f0f0f0 40%, #e2e2e2);
    border-right: 1px solid #cfcfcf;
`

const StripHead = styled.div`
    width: 26px;
    height: 60px;
    border-bottom: 1px solid #dcdcdc;
`

const BookTabSvg = styled.svg`
    overflow: visible;
`

const NavPanel = styled.div`
    width: 602px;
    flex: none;
    background: #f9f9f9;
    color: #111;
    font-size: 20.5px;
`

const NavHead = styled.div`
    height: 60px;
    display: flex;
    align-items: center;
    justify-content: space-between;
    padding: 0 15px 3px 16px;
    border-bottom: 1px solid #dadada;
    background: linear-gradient(#ececec, #f9f9f9 8px);
`

const NavTitle = styled.div`
    margin-right: 13px;
`

const Columns = styled.div`
    height: 700px;
    display: flex;
`

const Column = styled.div`
    width: ${p => p.$w}px;
    flex: none;
    display: flex;
    flex-direction: column;
    border-right: ${p => p.$line ? '1px solid #d0d0d0' : 'none'};
    background: linear-gradient(270deg, #f1f1f1, #f9f9f9 16px);
`

const List = styled.div`
    height: 643px;
    flex: none;
    border-bottom: 1px solid #dadada;
`

const SectionRow = styled.div`
    height: 57.5px;
    display: flex;
`

const Marker = styled.div`
    width: 19px;
    flex: none;
    padding: 4px 0 0 3px;
`

const SectionName = styled.div`
    width: 261px;
    height: 56px;
    display: flex;
    align-items: center;
    padding: 0 0 1px ${p => p.$sub ? 32.5 : 11}px;
    background: ${p => p.$active ? '#d2e3ed' : 'none'};
`

const Arrow = styled.div`
    width: 16px;
    margin-left: -23.5px;
    margin-right: 7.5px;
    padding-bottom: 2px;
`

const PageRow = styled.div`
    height: 56px;
    margin-bottom: 1.5px;
    display: flex;
    align-items: center;
    padding: 0 0 1px ${p => p.$sub ? 51 : 31.5}px;
    background: ${p => p.$active ? '#d2e3ed' : 'none'};
`

const AddRow = styled.div`
    height: 57px;
    display: flex;
    align-items: center;
    gap: 3.5px;
    padding: 0 0 2px 19px;
    color: ${PURPLE};
`

const Canvas = styled.div`
    width: 1291px;
    flex: none;
    position: relative;
    padding: 36px 0 0 49px;
    border-right: 1px solid #d0d0d0;
    background: linear-gradient(#f3f3f3, #fff 5px);
`

const Problems = styled.div`
    width: 1154px;
    height: 662px;
    display: flex;
    border: 2.5px solid #111;
`

const Problem = styled.div`
    width: ${p => p.$line ? 576 : 574}px;
    flex: none;
    border-left: ${p => p.$line ? '2.5px solid #111' : 'none'};
`

const Question = styled.div`
    height: 0;
    padding-left: ${p => p.$pl}px;
    font-family: Inter, sans-serif;
    font-weight: 200;
    font-feature-settings: 'cv11', 'ss03';
    font-size: 24.5px;
    line-height: 68px;
    color: #111;
`

const GraphSvg = styled.svg`
    font-family: Lato, sans-serif;
    font-weight: 900;
    font-size: 17px;
    fill: #1c1c1c;
`

const Answer = styled.div`
    width: 179px;
    height: 2px;
    margin: 83px 0 0 379.5px;
    background: #7a7a7a;
`

const NextBox = styled.div`
    width: 1068px;
    height: 24px;
    margin: 38px 0 0 107px;
    border: 1px solid #ababab;
    border-bottom: none;
`

const SideHandle = styled.div`
    position: absolute;
    top: 479px;
    right: -1px;
    width: 25px;
    height: 117px;
    background: #fff;
    border: 1px solid #ababab;
    border-right: none;
`

const ShelfBar = styled.div`
    height: 77px;
    flex: none;
    display: flex;
    align-items: center;
    background: #202124;
`

const Launcher = styled.div`
    width: 57px;
    height: 57px;
    flex: none;
    display: flex;
    align-items: center;
    justify-content: center;
    margin-left: 10px;
    border-radius: 50%;
    background: #37383b;

    span{
        width: 24px;
        height: 24px;
        border: 3px solid #fff;
        border-radius: 50%;
    }
`

const Apps = styled.div`
    display: flex;
    margin-left: 401px;
`

const AppSlot = styled.div`
    width: 89.6px;
    height: 77px;
    flex: none;
    display: flex;
    align-items: center;
    justify-content: center;
    position: relative;
    padding-bottom: 1px;

    &::after{
        content: '';
        position: absolute;
        bottom: 3.5px;
        width: ${p => p.$run || 0};
        height: 2.5px;
        background: ${p => p.$live ? '#fff' : '#96989b'};
    }
`

const Status = styled.div`
    width: 230px;
    height: 59px;
    flex: none;
    display: flex;
    align-items: center;
    margin-left: auto;
    margin-right: 10px;
    padding-left: 19px;
    padding-top: 1px;
    border-radius: 30px;
    background: #37383b;
    color: #e8eaed;
    font-family: Roboto, sans-serif;
    font-size: 21.5px;
    font-weight: 500;

    > svg{
        margin-left: 12px;
    }
    > svg + svg{
        margin-left: 15px;
        margin-right: 14px;
    }
`

const Count = styled.div`
    width: 26px;
    height: 26px;
    margin-left: 13px;
    border-radius: 50%;
    background: #e8eaed;
    color: #37383b;
    text-align: center;
    font-size: 19px;
    line-height: 27px;
    font-weight: 700;
`


export default App
